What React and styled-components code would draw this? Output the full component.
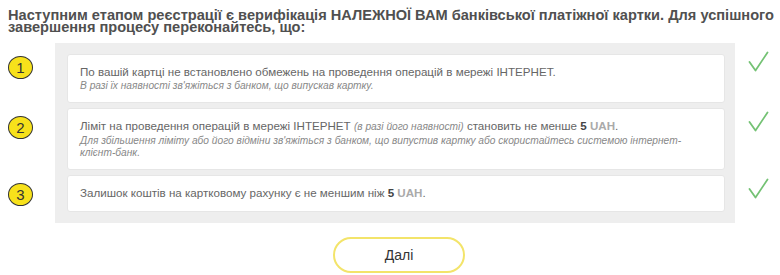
import React from "react";
import styled, { createGlobalStyle } from "styled-components";

const GlobalStyle = createGlobalStyle`
  body {
    margin: 0;
    background: #fff;
    font-family: "Liberation Sans", Arial, sans-serif;
  }
`;

const Page = styled.div`
  width: 780px;
`;

const Title = styled.h3`
  margin: 0;
  padding: 9px 2px 0 8px;
  font-size: 14.6px;
  line-height: 12px;
  font-weight: bold;
  color: #505050;
`;

const List = styled.div`
  margin-top: 10px;
  display: flex;
  flex-direction: column;
`;

const Row = styled.div`
  display: flex;
  align-items: flex-start;
`;

const NumCell = styled.div`
  width: 55px;
  flex-shrink: 0;
  display: flex;
  padding-left: 8px;
  padding-top: 13px;
  box-sizing: border-box;
`;

const Num = styled.div`
  width: 25px;
  height: 23px;
  box-sizing: border-box;
  border-radius: 50%;
  border: 1.5px solid #333;
  background: #f7e11b;
  color: #333;
  font-size: 15px;
  display: flex;
  align-items: center;
  justify-content: center;
`;

const Panel = styled.div`
  width: 680px;
  flex-shrink: 0;
  box-sizing: border-box;
  background: #eeeeee;
  padding: ${(p) => (p.first ? "11px" : "5px")} 10px ${(p) => (p.last ? "11px" : "0")} 12px;
`;

const Card = styled.div`
  background: #fff;
  border: 1px solid #e6e6e6;
  border-radius: 3px;
  padding: 8px 13px 10px 12px;
`;

const Main = styled.div`
  font-size: 11.6px;
  line-height: 17px;
  color: #666;
`;

const Note = styled.div`
  font-size: 10.2px;
  line-height: 12px;
  font-style: italic;
  color: #888;
`;

const Small = styled.i`
  font-size: 10.2px;
  color: #888;
`;

const Bold = styled.b`
  color: ${(p) => (p.light ? "#aaa" : "#444")};
`;

const CheckCell = styled.div`
  padding: 8px 0 0 13px;
`;

const Footer = styled.div`
  margin: 14px 0 0 59px;
  width: 680px;
  display: flex;
  justify-content: center;
`;

const NextButton = styled.button`
  width: 132px;
  height: 36px;
  border: 2px solid #f3e46a;
  border-radius: 18px;
  background: #fff;
  font-family: "Liberation Sans", Arial, sans-serif;
  font-size: 14px;
  color: #333;
  cursor: pointer;
`;

const Check = () => (
  <svg width="21" height="21" viewBox="0 0 21 21">
    <path d="M1.5 11 L7.5 19.5 L19.5 1.5" fill="none" stroke="#74c274" strokeWidth="1.8" strokeLinecap="round" strokeLinejoin="round" />
  </svg>
);

const rows = [
  {
    n: 1,
    main: <>По вашій картці не встановлено обмежень на проведення операцій в мережі ІНТЕРНЕТ.</>,
    note: "В разі їх наявності зв'яжіться з банком, що випускав картку.",
  },
  {
    n: 2,
    main: (
      <>
        Ліміт на проведення операцій в мережі ІНТЕРНЕТ <Small>(в разі його наявності)</Small> становить не менше{" "}
        <Bold>5</Bold> <Bold light>UAH</Bold>.
      </>
    ),
    note: "Для збільшення ліміту або його відміни зв'яжіться з банком, що випустив картку або скористайтесь системою інтернет-клієнт-банк.",
  },
  {
    n: 3,
    main: (
      <>
        Залишок коштів на картковому рахунку є не меншим ніж <Bold>5</Bold> <Bold light>UAH</Bold>.
      </>
    ),
  },
];

export default function App() {
  return (
    <Page>
      <GlobalStyle />
      <Title>
        Наступним етапом реєстрації є верифікація НАЛЕЖНОЇ ВАМ банківської платіжної картки. Для успішного завершення процесу переконайтесь, що:
      </Title>
      <List>
        {rows.map((r, i) => (
          <Row key={r.n}>
            <NumCell>
              <Num>{r.n}</Num>
            </NumCell>
            <Panel first={i === 0} last={i === rows.length - 1}>
              <Card>
                <Main>{r.main}</Main>
                {r.note && <Note>{r.note}</Note>}
              </Card>
            </Panel>
            <CheckCell>
              <Check />
            </CheckCell>
          </Row>
        ))}
      </List>
      <Footer>
        <NextButton>Далі</NextButton>
      </Footer>
    </Page>
  );
}
